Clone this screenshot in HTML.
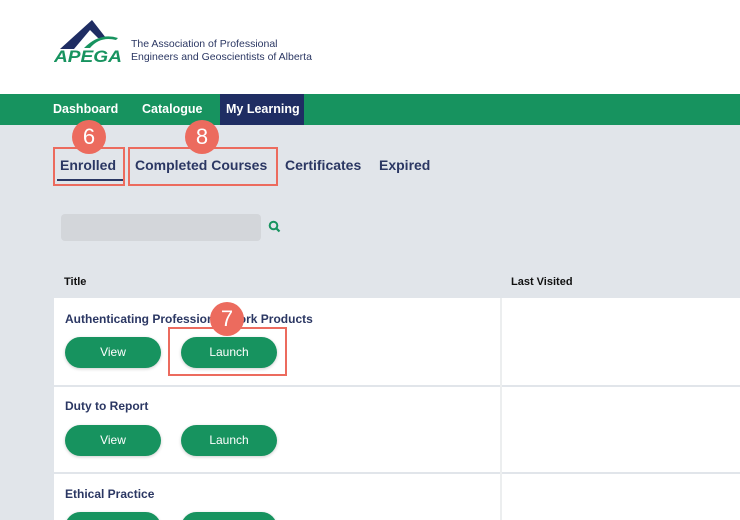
<!DOCTYPE html>
<html style="overflow:hidden;width:740px;height:520px"><head><style>
*{margin:0;padding:0;box-sizing:border-box}
body{width:740px;height:520px;overflow:hidden;background:#e1e5ea;font-family:"Liberation Sans",sans-serif;position:relative}
.a{position:absolute}
.hdr{left:0;top:0;width:740px;height:94px;background:#fff}
.nav{left:0;top:94px;width:740px;height:31px;background:#17935f}
.nav span{position:absolute;top:8px;color:#fff;font-weight:bold;font-size:12.5px}
.tab{top:157px;font-weight:bold;font-size:14px;color:#2b3763}
.box{border:2.5px solid #ec6b5e}
.circ{width:34px;height:34px;border-radius:50%;background:#ec6b5e;color:#fff;font-size:22px;text-align:center;line-height:34px}
.btn{width:96px;height:31px;border-radius:16px;background:#17935f;color:#fff;font-size:12px;text-align:center;line-height:31px;box-shadow:0 1px 3px rgba(0,0,0,.2)}
.row{left:54px;width:686px;background:#fff}
.tt{font-weight:bold;font-size:12px;color:#2b3763}
</style></head><body>
<div class="a hdr"></div>
<svg class="a" style="left:54px;top:20px" width="72" height="44" viewBox="0 0 72 44">
<polygon points="6,29 38,0 52,18 44,18 36,10 20,29" fill="#1f2d63"/>
<path d="M30,28 Q46,12 64,18 L62,20 Q46,16 36,28Z" fill="#17935f"/>
<text x="0" y="42" font-family="Liberation Sans" font-weight="bold" font-style="italic" font-size="17" fill="#17935f" textLength="68" lengthAdjust="spacingAndGlyphs">APEGA</text>
</svg>
<div class="a" style="left:131px;top:38px;font-size:10.5px;color:#2b3763;line-height:13px">The Association of Professional<br>Engineers and Geoscientists of Alberta</div>
<div class="a nav">
<span style="left:53px">Dashboard</span>
<span style="left:142px">Catalogue</span>
<div class="a" style="left:220px;top:0;width:84px;height:31px;background:#1f2d63"></div>
<span style="left:226px">My Learning</span>
</div>
<div class="a tab" style="left:60px">Enrolled</div>
<div class="a" style="left:57px;top:179px;width:66px;height:2px;background:#2b3763"></div>
<div class="a tab" style="left:135px">Completed Courses</div>
<div class="a tab" style="left:285px">Certificates</div>
<div class="a tab" style="left:379px">Expired</div>
<div class="a box" style="left:53px;top:147px;width:72px;height:39px"></div>
<div class="a box" style="left:128px;top:147px;width:150px;height:39px"></div>
<div class="a circ" style="left:72px;top:120px">6</div>
<div class="a circ" style="left:185px;top:120px">8</div>
<div class="a" style="left:61px;top:214px;width:200px;height:27px;background:#d3d6da;border-radius:4px"></div>
<svg class="a" style="left:268px;top:220px" width="13" height="13" viewBox="0 0 13 13"><circle cx="5.5" cy="5.5" r="3.8" fill="none" stroke="#17935f" stroke-width="2"/><line x1="8.3" y1="8.3" x2="11.5" y2="11.5" stroke="#17935f" stroke-width="2.2"/></svg>
<div class="a" style="left:64px;top:276px;font-weight:bold;font-size:11px;color:#111">Title</div>
<div class="a" style="left:511px;top:276px;font-weight:bold;font-size:11px;color:#111">Last Visited</div>
<div class="a row" style="top:298px;height:87px"></div>
<div class="a row" style="top:387px;height:85px"></div>
<div class="a row" style="top:474px;height:46px"></div>
<div class="a" style="left:500px;top:298px;width:2px;height:222px;background:#eceeef"></div>
<div class="a tt" style="left:65px;top:312px">Authenticating Professional Work Products</div>
<div class="a btn" style="left:65px;top:337px">View</div>
<div class="a btn" style="left:181px;top:337px">Launch</div>
<div class="a box" style="left:168px;top:327px;width:119px;height:49px"></div>
<div class="a circ" style="left:210px;top:302px">7</div>
<div class="a tt" style="left:65px;top:399px">Duty to Report</div>
<div class="a btn" style="left:65px;top:425px">View</div>
<div class="a btn" style="left:181px;top:425px">Launch</div>
<div class="a tt" style="left:65px;top:487px">Ethical Practice</div>
<div class="a btn" style="left:65px;top:512px">View</div>
<div class="a btn" style="left:181px;top:512px">Launch</div>
</body></html>
